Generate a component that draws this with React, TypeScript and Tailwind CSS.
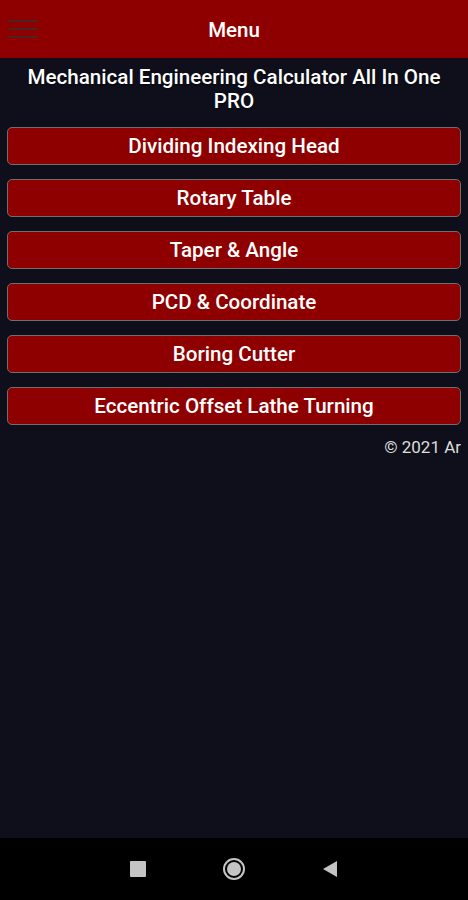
const items = [
  "Dividing Indexing Head",
  "Rotary Table",
  "Taper & Angle",
  "PCD & Coordinate",
  "Boring Cutter",
  "Eccentric Offset Lathe Turning",
];

export default function App() {
  return (
    <div
      className="w-[468px] h-[900px] flex flex-col bg-[#0f0f1b] overflow-hidden"
      style={{ fontFamily: "Roboto, 'Liberation Sans', sans-serif" }}
    >
      {/* top bar */}
      <div className="relative h-[58px] shrink-0 bg-[#8e0000] flex items-center justify-center">
        <div className="absolute left-[8px] top-[20px] flex flex-col gap-[6px]">
          <div className="w-[30px] h-[2px] bg-[#4d2222]" />
          <div className="w-[30px] h-[2px] bg-[#4d2222]" />
          <div className="w-[30px] h-[2px] bg-[#4d2222]" />
        </div>
        <span className="mt-[3px] text-white text-[20.5px] font-medium">Menu</span>
      </div>

      <div className="flex-1 flex flex-col px-[7px]">
        <h1 className="mt-[7px] px-[14px] text-center text-white text-[20.6px] leading-[24px] font-medium [text-shadow:0_1px_2px_rgba(0,0,0,0.6)]">
          Mechanical Engineering Calculator All In One PRO
        </h1>

        <div className="mt-[14px] flex flex-col gap-[14px]">
          {items.map((label) => (
            <button
              key={label}
              className="h-[38px] w-full rounded-[5px] border border-[#6f6f6f] bg-[#8e0000] text-white text-[20.6px] font-medium"
            >
              {label}
            </button>
          ))}
        </div>

        <div className="mt-[12px] text-right text-[#dddddd] text-[17px] leading-[20px] overflow-hidden whitespace-nowrap">
          © 2021 Ar
        </div>
      </div>

      {/* android nav bar */}
      <div className="h-[62px] shrink-0 bg-black flex items-center justify-center gap-[77px]">
        <div className="w-[16px] h-[16px] bg-[#c4c4c4] rounded-[1px]" />
        <div className="w-[22px] h-[22px] rounded-full border-2 border-[#c4c4c4] flex items-center justify-center">
          <div className="w-[14px] h-[14px] rounded-full bg-[#c4c4c4]" />
        </div>
        <svg width="16" height="18" viewBox="0 0 16 18">
          <polygon points="15,1 15,17 1,9" fill="#c4c4c4" />
        </svg>
      </div>
    </div>
  );
}
